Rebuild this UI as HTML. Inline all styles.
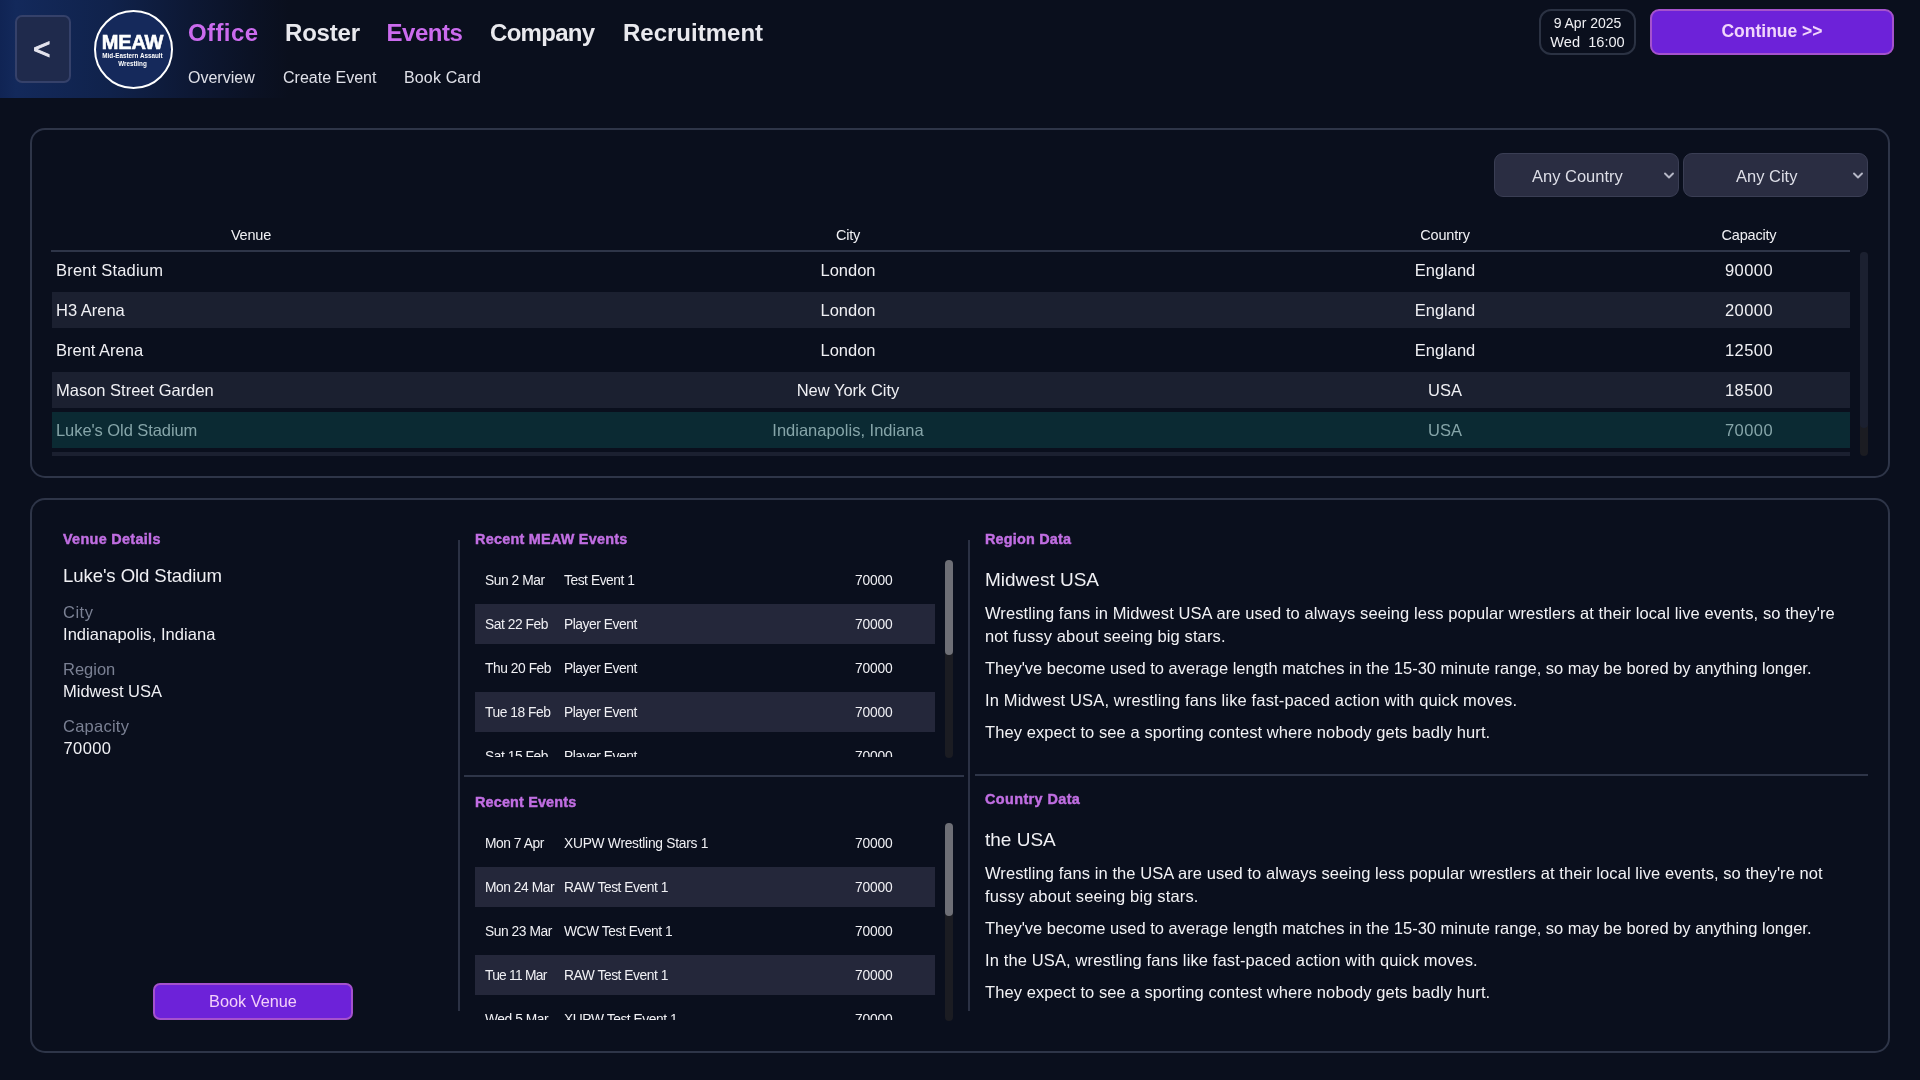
<!DOCTYPE html>
<html lang="en">
<head>
<meta charset="utf-8">
<title>MEAW - Events</title>
<style>
*{box-sizing:border-box;margin:0;padding:0}
html,body{width:1920px;height:1080px;overflow:hidden}
body{background:#0a0f1d;color:#f0f0f4;font-family:"Liberation Sans",sans-serif;position:relative}
#wrap{position:absolute;left:0;top:0;width:1920px;height:1080px;will-change:transform;overflow:hidden}
.abs{position:absolute}
.t{position:absolute;white-space:nowrap;line-height:1}
/* header */
#hdr{position:absolute;left:0;top:0;width:1920px;height:98px;background:linear-gradient(90deg,#102454 0px,#13295b 16px,#10224b 110px,#0d1834 190px,#0b1225 250px,#0a0f1d 290px)}
#back{position:absolute;left:15px;top:15px;width:56px;height:68px;border-radius:7px;background:#1f2a4c;border:2px solid #35416a;}
#logo{position:absolute;left:93.5px;top:9.5px;width:79px;height:79px;border-radius:50%;background:#15295b;border:2px solid #fff}
.nav{font-weight:bold;font-size:24px;top:21px;color:#e9e9ee}
.sub{font-size:16px;top:70px;color:#dfe0e8}
.pur{color:#cb6bee}
#date{position:absolute;left:1539px;top:9px;width:97px;height:46px;border:2px solid #2b3243;border-radius:12px;background:#0a0f1d}
#cont{position:absolute;left:1650px;top:9px;width:244px;height:46px;border-radius:9px;background:#6d22d9;border:2px solid #a552cd}
/* panels */
.panel{position:absolute;left:30px;width:1860px;border:2px solid #2e3548;border-radius:15px}
#p1{top:128px;height:350px}
#p2{top:498px;height:555px}
.sel{position:absolute;top:153px;width:185px;height:44px;border-radius:9px;background:#2a2d42;border:1px solid #3a3e54}
.th{font-size:14.5px;top:227.5px;color:#f0f0f4;letter-spacing:-0.2px}
.row{position:absolute;left:52px;width:1798px;height:36px}
.row.alt{background:#1b2030}
.row.selr{background:#0b2a33}
.row .t{font-size:16.5px;top:10px}
.selr .t{color:#86a5a9}
.ttl{font-weight:bold;font-size:14.4px;color:#c16ee2;-webkit-text-stroke:0.45px #c16ee2}
.lbl{font-size:16.5px;color:#7a8093}
.val{font-size:16.5px}
.vline{position:absolute;width:2px;background:#2b3144;top:540px;height:471px}
.hline{position:absolute;height:2px;background:#2e3548}
.list{position:absolute;left:475px;width:460px;height:197px;overflow:hidden}
.li{position:absolute;left:0;width:460px;height:40px}
.li.alt{background:#24273a}
.li .t{font-size:13.8px;top:14px;letter-spacing:-0.45px}
.sb{position:absolute;width:8px;border-radius:4px;background:#1b1c22}
.sbt{position:absolute;width:8px;border-radius:4px;background:#6e6f76}
.p{position:absolute;left:985px;width:880px;white-space:nowrap;font-size:16.5px;line-height:23px;color:#f2f2f5}
</style>
</head>
<body>
<div id="wrap">
<div id="hdr"></div>
<div id="back"><span class="t" style="left:16px;top:17px;font-size:30px;font-weight:normal;-webkit-text-stroke:0.9px #e4e4ee;color:#e4e4ee">&lt;</span></div>
<div id="logo">
  <span class="t" style="left:-0.5px;width:75px;text-align:center;top:20.5px;font-size:20px;font-weight:bold;color:#fff;letter-spacing:-0.15px;-webkit-text-stroke:0.6px #fff">MEAW</span>
  <span class="t" style="left:-0.5px;width:75px;text-align:center;top:41.5px;font-size:6.3px;font-weight:bold;color:#fff">Mid-Eastern Assault</span>
  <span class="t" style="left:-0.5px;width:75px;text-align:center;top:49.5px;font-size:6.3px;font-weight:bold;color:#fff">Wrestling</span>
</div>
<span class="t nav pur" style="left:188px;letter-spacing:0.4px">Office</span>
<span class="t nav" style="left:285px;letter-spacing:-0.2px">Roster</span>
<span class="t nav pur" style="left:386.5px;letter-spacing:-0.45px">Events</span>
<span class="t nav" style="left:490px;letter-spacing:-0.7px">Company</span>
<span class="t nav" style="left:623px">Recruitment</span>
<span class="t sub" style="left:188px">Overview</span>
<span class="t sub" style="left:283px">Create Event</span>
<span class="t sub" style="left:404px;letter-spacing:0.15px">Book Card</span>
<div id="date">
  <span class="t" style="left:0;width:93px;text-align:center;top:5px;font-size:14px">9 Apr 2025</span>
  <span class="t" style="left:0;width:93px;text-align:center;top:23.5px;font-size:14.6px;white-space:pre">Wed  16:00</span>
</div>
<div id="cont"><span class="t" style="left:0;width:240px;text-align:center;top:11.5px;font-size:17.5px;font-weight:bold;color:#f1d6fb">Continue &gt;&gt;</span></div>

<!-- PANEL 1 -->
<div class="panel" id="p1"></div>
<div class="sel" style="left:1494px"><span class="t" style="left:37px;top:14px;font-size:16.5px;color:#dddee7">Any Country</span>
<svg class="abs" style="left:168px;top:17px" width="12" height="10" viewBox="0 0 12 10"><path d="M2 2.5 L6 6.5 L10 2.5" fill="none" stroke="#b6b8c7" stroke-width="1.9" stroke-linecap="round" stroke-linejoin="round"/></svg></div>
<div class="sel" style="left:1683px"><span class="t" style="left:52px;top:14px;font-size:16.5px;color:#dddee7">Any City</span>
<svg class="abs" style="left:168px;top:17px" width="12" height="10" viewBox="0 0 12 10"><path d="M2 2.5 L6 6.5 L10 2.5" fill="none" stroke="#b6b8c7" stroke-width="1.9" stroke-linecap="round" stroke-linejoin="round"/></svg></div>
<span class="t th" style="left:151px;width:200px;text-align:center">Venue</span>
<span class="t th" style="left:748px;width:200px;text-align:center">City</span>
<span class="t th" style="left:1345px;width:200px;text-align:center">Country</span>
<span class="t th" style="left:1649px;width:200px;text-align:center">Capacity</span>
<div class="hline" style="left:51px;top:250px;width:1799px"></div>
<div class="row " style="top:252px"><span class="t" style="left:4px;letter-spacing:0.2px">Brent Stadium</span><span class="t" style="left:646px;width:300px;text-align:center">London</span><span class="t" style="left:1243px;width:300px;text-align:center">England</span><span class="t" style="left:1547px;width:300px;text-align:center;letter-spacing:0.45px">90000</span></div>
<div class="row alt" style="top:292px"><span class="t" style="left:4px">H3 Arena</span><span class="t" style="left:646px;width:300px;text-align:center">London</span><span class="t" style="left:1243px;width:300px;text-align:center">England</span><span class="t" style="left:1547px;width:300px;text-align:center;letter-spacing:0.45px">20000</span></div>
<div class="row " style="top:332px"><span class="t" style="left:4px">Brent Arena</span><span class="t" style="left:646px;width:300px;text-align:center">London</span><span class="t" style="left:1243px;width:300px;text-align:center">England</span><span class="t" style="left:1547px;width:300px;text-align:center;letter-spacing:0.45px">12500</span></div>
<div class="row alt" style="top:372px"><span class="t" style="left:4px">Mason Street Garden</span><span class="t" style="left:646px;width:300px;text-align:center">New York City</span><span class="t" style="left:1243px;width:300px;text-align:center">USA</span><span class="t" style="left:1547px;width:300px;text-align:center;letter-spacing:0.45px">18500</span></div>
<div class="row selr" style="top:412px"><span class="t" style="left:4px;letter-spacing:-0.07px">Luke's Old Stadium</span><span class="t" style="left:646px;width:300px;text-align:center">Indianapolis, Indiana</span><span class="t" style="left:1243px;width:300px;text-align:center">USA</span><span class="t" style="left:1547px;width:300px;text-align:center;letter-spacing:0.45px">70000</span></div>
<div class="row alt" style="top:452px;height:4px"></div>

<div class="sb" style="left:1860px;top:252px;height:204px"></div>
<div class="sbt" style="left:1860px;top:252px;height:176px;background:#1b2030"></div>

<!-- PANEL 2 -->
<div class="panel" id="p2"></div>
<span class="t ttl" style="left:63px;top:532px;letter-spacing:0.32px">Venue Details</span>
<span class="t" style="left:63px;top:566.5px;font-size:18.6px;letter-spacing:-0.1px">Luke's Old Stadium</span>
<span class="t lbl" style="left:63px;top:604px;letter-spacing:0.5px">City</span>
<span class="t val" style="left:63px;top:626px;letter-spacing:0.05px">Indianapolis, Indiana</span>
<span class="t lbl" style="left:63px;top:661px">Region</span>
<span class="t val" style="left:63px;top:683px">Midwest USA</span>
<span class="t lbl" style="left:63px;top:718px;letter-spacing:0.25px">Capacity</span>
<span class="t val" style="left:63.5px;top:740px;letter-spacing:0.4px">70000</span>
<div class="abs" style="left:153px;top:983px;width:200px;height:37px;border-radius:7px;background:#6d22d9;border:2px solid #a552cd"><span class="t" style="left:0;width:196px;text-align:center;top:7.5px;font-size:16.3px;color:#f3d0fa">Book Venue</span></div>
<div class="vline" style="left:458px"></div>
<div class="vline" style="left:968px"></div>
<span class="t ttl" style="left:475px;top:532px;letter-spacing:0.26px">Recent MEAW Events</span>
<div class="list" style="top:560px">
<div class="li" style="top:0px"><span class="t" style="left:10px">Sun 2 Mar</span><span class="t" style="left:89px">Test Event 1</span><span class="t" style="left:380px;letter-spacing:-0.15px">70000</span></div>
<div class="li alt" style="top:44px"><span class="t" style="left:10px">Sat 22 Feb</span><span class="t" style="left:89px">Player Event</span><span class="t" style="left:380px;letter-spacing:-0.15px">70000</span></div>
<div class="li" style="top:88px"><span class="t" style="left:10px">Thu 20 Feb</span><span class="t" style="left:89px">Player Event</span><span class="t" style="left:380px;letter-spacing:-0.15px">70000</span></div>
<div class="li alt" style="top:132px"><span class="t" style="left:10px">Tue 18 Feb</span><span class="t" style="left:89px">Player Event</span><span class="t" style="left:380px;letter-spacing:-0.15px">70000</span></div>
<div class="li" style="top:176px"><span class="t" style="left:10px">Sat 15 Feb</span><span class="t" style="left:89px">Player Event</span><span class="t" style="left:380px;letter-spacing:-0.15px">70000</span></div>
</div>
<div class="sb" style="left:945px;top:560px;height:198px"></div>
<div class="sbt" style="left:945px;top:560px;height:95px"></div>
<div class="hline" style="left:464px;top:775px;width:500px"></div>
<span class="t ttl" style="left:475px;top:795px;letter-spacing:0.17px">Recent Events</span>
<div class="list" style="top:823px">
<div class="li" style="top:0px"><span class="t" style="left:10px">Mon 7 Apr</span><span class="t" style="left:89px;letter-spacing:-0.27px">XUPW Wrestling Stars 1</span><span class="t" style="left:380px;letter-spacing:-0.15px">70000</span></div>
<div class="li alt" style="top:44px"><span class="t" style="left:10px">Mon 24 Mar</span><span class="t" style="left:89px">RAW Test Event 1</span><span class="t" style="left:380px;letter-spacing:-0.15px">70000</span></div>
<div class="li" style="top:88px"><span class="t" style="left:10px">Sun 23 Mar</span><span class="t" style="left:89px">WCW Test Event 1</span><span class="t" style="left:380px;letter-spacing:-0.15px">70000</span></div>
<div class="li alt" style="top:132px"><span class="t" style="left:10px;letter-spacing:-0.75px">Tue 11 Mar</span><span class="t" style="left:89px">RAW Test Event 1</span><span class="t" style="left:380px;letter-spacing:-0.15px">70000</span></div>
<div class="li" style="top:176px"><span class="t" style="left:10px">Wed 5 Mar</span><span class="t" style="left:89px">XUPW Test Event 1</span><span class="t" style="left:380px;letter-spacing:-0.15px">70000</span></div>
</div>
<div class="sb" style="left:945px;top:823px;height:198px"></div>
<div class="sbt" style="left:945px;top:823px;height:93px"></div>
<span class="t ttl" style="left:985px;top:532px;letter-spacing:0.21px">Region Data</span>
<span class="t" style="left:985px;top:570px;font-size:19px">Midwest USA</span>
<div class="p" style="top:602px"><span style="letter-spacing:0.082px">Wrestling fans in Midwest USA are used to always seeing less popular wrestlers at their local live events, so they're</span><br><span style="letter-spacing:0.12px">not fussy about seeing big stars.</span></div>
<div class="p" style="top:657px;letter-spacing:-0.012px">They've become used to average length matches in the 15-30 minute range, so may be bored by anything longer.</div>
<div class="p" style="top:689px;letter-spacing:0.146px">In Midwest USA, wrestling fans like fast-paced action with quick moves.</div>
<div class="p" style="top:721px;letter-spacing:0.08px">They expect to see a sporting contest where nobody gets badly hurt.</div>
<div class="hline" style="left:975px;top:774px;width:893px"></div>
<span class="t ttl" style="left:985px;top:792px;letter-spacing:0.41px">Country Data</span>
<span class="t" style="left:985px;top:830px;font-size:19px">the USA</span>
<div class="p" style="top:862px"><span style="letter-spacing:0.065px">Wrestling fans in the USA are used to always seeing less popular wrestlers at their local live events, so they're not</span><br><span style="letter-spacing:0.155px">fussy about seeing big stars.</span></div>
<div class="p" style="top:917px;letter-spacing:-0.012px">They've become used to average length matches in the 15-30 minute range, so may be bored by anything longer.</div>
<div class="p" style="top:949px;letter-spacing:0.127px">In the USA, wrestling fans like fast-paced action with quick moves.</div>
<div class="p" style="top:981px;letter-spacing:0.08px">They expect to see a sporting contest where nobody gets badly hurt.</div>
</div>
</body>
</html>
